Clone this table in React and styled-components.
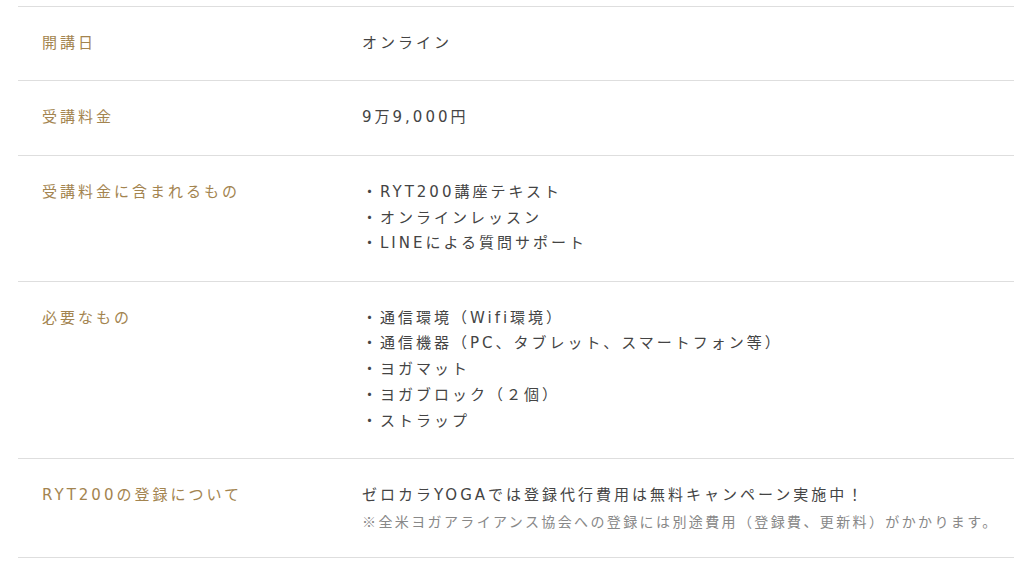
import React from "react";
import styled, { createGlobalStyle } from "styled-components";

const Global = createGlobalStyle`
  html, body { margin: 0; padding: 0; background: #fff; }
  body { font-family: "DejaVu Sans", "Noto Sans CJK JP", sans-serif; }
`;

const Page = styled.div`
  padding: 6px 0 0 18px;
`;

const Table = styled.dl`
  margin: 0;
  border-top: 1px solid #dedede;
`;

const Row = styled.div`
  display: grid;
  grid-template-columns: 344px 1fr;
  border-bottom: 1px solid #dedede;
  padding: 23.9px 0 23.9px;
`;

const Label = styled.dt`
  margin: 0;
  padding-left: 24px;
  font-size: 15px;
  line-height: 25.7px;
  letter-spacing: 0.2em;
  color: #a3844f;
`;

const Value = styled.dd`
  margin: 0;
  font-size: 15px;
  line-height: 25.7px;
  letter-spacing: 0.2em;
  color: #444;
`;

const Line = styled.div``;

const Note = styled.div`
  font-family: "Noto Sans CJK JP", sans-serif;
  font-size: 14px;
  line-height: 24.3px;
  letter-spacing: 0.17em;
  color: #888;
`;

const rows = [
  { label: "開講日", lines: ["オンライン"] },
  { label: "受講料金", lines: ["9万9,000円"] },
  {
    label: "受講料金に含まれるもの",
    lines: ["・RYT200講座テキスト", "・オンラインレッスン", "・LINEによる質問サポート"],
  },
  {
    label: "必要なもの",
    lines: [
      "・通信環境（Wifi環境）",
      "・通信機器（PC、タブレット、スマートフォン等）",
      "・ヨガマット",
      "・ヨガブロック（２個）",
      "・ストラップ",
    ],
  },
];

export default function App() {
  return (
    <Page>
      <Global />
      <Table>
        {rows.map((r) => (
          <Row key={r.label}>
            <Label>{r.label}</Label>
            <Value>
              {r.lines.map((l) => (
                <Line key={l}>{l}</Line>
              ))}
            </Value>
          </Row>
        ))}
        <Row>
          <Label>RYT200の登録について</Label>
          <Value>
            <Line>ゼロカラYOGAでは登録代行費用は無料キャンペーン実施中！</Line>
            <Note>※全米ヨガアライアンス協会への登録には別途費用（登録費、更新料）がかかります。</Note>
          </Value>
        </Row>
      </Table>
    </Page>
  );
}
